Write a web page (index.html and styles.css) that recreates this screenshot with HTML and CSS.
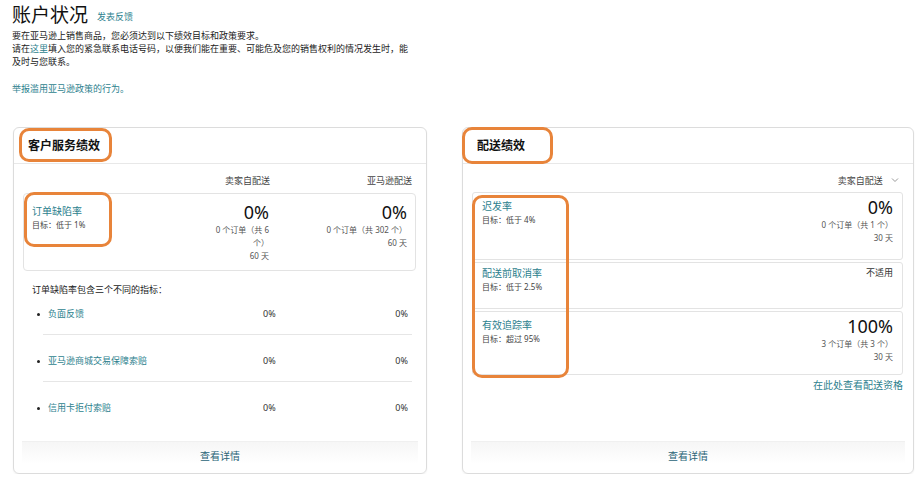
FILE: index.html
```html
<!DOCTYPE html>
<html lang="zh-CN">
<head>
    <meta charset="UTF-8">
    <title>账户状况</title>
    <link rel="stylesheet" href="styles.css">
</head>
<body>
    <div class="page">
        <div class="intro">
            <h1>账户状况 <a class="feedback" href="#">发表反馈</a></h1>
            <p>要在亚马逊上销售商品，您必须达到以下绩效目标和政策要求。</p>
            <p>请在<a href="#">这里</a>填入您的紧急联系电话号码，以便我们能在重要、可能危及您的销售权利的情况发生时，能<br>及时与您联系。</p>
            <p class="report"><a href="#">举报滥用亚马逊政策的行为。</a></p>
        </div>

        <div class="cards">
            <div class="card">
                <div class="card-head">客户服务绩效</div>
                <div class="card-body">
                    <div class="col-heads">
                        <span></span>
                        <span>卖家自配送</span>
                        <span>亚马逊配送</span>
                    </div>
                    <div class="metric-box odr">
                        <div class="label">
                            <a href="#">订单缺陷率</a>
                            <div class="goal">目标：低于 1%</div>
                        </div>
                        <div class="value">
                            <div class="big">0%</div>
                            <div class="sub">0 个订单（共 6<br>个）</div>
                            <div class="sub">60 天</div>
                        </div>
                        <div class="value">
                            <div class="big">0%</div>
                            <div class="sub">0 个订单（共 302 个）</div>
                            <div class="sub">60 天</div>
                        </div>
                    </div>
                    <p class="desc">订单缺陷率包含三个不同的指标：</p>
                    <ul class="metric-list">
                        <li><a href="#">负面反馈</a><span>0%</span><span class="r">0%</span></li>
                        <li><a href="#">亚马逊商城交易保障索赔</a><span>0%</span><span class="r">0%</span></li>
                        <li><a href="#">信用卡拒付索赔</a><span>0%</span><span class="r">0%</span></li>
                    </ul>
                </div>
                <div class="card-foot"><a href="#">查看详情</a></div>
                <div class="mark" style="left:5px;top:0;width:93px;height:34px"></div>
                <div class="mark" style="left:10px;top:64px;width:88px;height:55px"></div>
            </div>

            <div class="card">
                <div class="card-head">配送绩效</div>
                <div class="card-body">
                    <div class="select">卖家自配送
                        <svg width="8" height="6" viewBox="0 0 8 6"><path d="M1 1.5 L4 4.5 L7 1.5" fill="none" stroke="#999" stroke-width="1"/></svg>
                    </div>
                    <div class="ship-box tall">
                        <div class="label">
                            <a href="#">迟发率</a>
                            <div class="goal">目标：低于 4%</div>
                        </div>
                        <div class="value">
                            <div class="big">0%</div>
                            <div class="sub">0 个订单（共 1 个）</div>
                            <div class="sub">30 天</div>
                        </div>
                    </div>
                    <div class="ship-box short">
                        <div class="label">
                            <a href="#">配送前取消率</a>
                            <div class="goal">目标：低于 2.5%</div>
                        </div>
                        <div class="value">
                            <div class="na">不适用</div>
                        </div>
                    </div>
                    <div class="ship-box mid">
                        <div class="label">
                            <a href="#">有效追踪率</a>
                            <div class="goal">目标：超过 95%</div>
                        </div>
                        <div class="value">
                            <div class="big">100%</div>
                            <div class="sub">3 个订单（共 3 个）</div>
                            <div class="sub">30 天</div>
                        </div>
                    </div>
                    <div class="more"><a href="#">在此处查看配送资格</a></div>
                </div>
                <div class="card-foot"><a href="#">查看详情</a></div>
                <div class="mark" style="left:-1px;top:-1px;width:91px;height:37px"></div>
                <div class="mark" style="left:9px;top:67px;width:97px;height:183px"></div>
            </div>
        </div>
    </div>
</body>
</html>
```

FILE: styles.css
```css
body {
    margin: 0;
    background: #fff;
    color: #222;
    font-family: "Noto Sans", "Noto Sans CJK SC", sans-serif;
}

a {
    color: #2d7f8e;
    text-decoration: none;
}

.page {
    padding: 3px 10px 0 12px;
}

.intro h1 {
    margin: 0;
    font-size: 19px;
    line-height: 24px;
    font-weight: normal;
    color: #111;
}

.feedback {
    font-size: 9px;
    margin-left: 4px;
    vertical-align: 2px;
}

.intro p {
    margin: 0;
    font-size: 9px;
    line-height: 13px;
}

.intro .report {
    margin-top: 14px;
}

.cards {
    display: grid;
    grid-template-columns: 414px 452px;
    gap: 35px;
    margin-top: 32px;
    padding-left: 1px;
}

.card {
    position: relative;
    height: 347px;
    box-sizing: border-box;
    border: 1px solid #dcdcdc;
    border-radius: 6px;
    box-shadow: 0 1px 2px rgba(0,0,0,0.06);
    display: flex;
    flex-direction: column;
}

.card-head {
    height: 35px;
    line-height: 35px;
    padding: 0 14px;
    font-size: 12px;
    font-weight: bold;
    color: #111;
    border-bottom: 1px solid #e8e8e8;
}

.card-body {
    padding: 9px 10px 0 9px;
}

.col-heads {
    display: grid;
    grid-template-columns: 1fr 80px 142px;
    padding: 0 4px 0 9px;
    font-size: 9px;
    line-height: 16px;
    color: #444;
    text-align: right;
    margin-bottom: 4px;
}

.metric-box {
    display: grid;
    grid-template-columns: 1fr 80px 138px;
    border: 1px solid #e3e3e3;
    border-radius: 4px;
    padding: 7px 8px 8px 8px;
}

.label {
    padding-top: 3px;
}

.label a {
    display: block;
    font-size: 10px;
    line-height: 14px;
}

.goal {
    font-size: 8px;
    line-height: 14px;
    color: #444;
}

.value {
    text-align: right;
}

.big {
    font-size: 18px;
    line-height: 22px;
    color: #111;
}

.sub {
    font-size: 8px;
    line-height: 13px;
    color: #555;
}

.desc {
    margin: 12px 0 0 9px;
    font-size: 9px;
    line-height: 14px;
}

.metric-list {
    margin: 0;
    padding: 0 4px 0 20px;
    font-size: 9px;
    line-height: 14px;
}

.metric-list li {
    display: grid;
    grid-template-columns: 1fr 72px 73px;
    padding: 19px 4px 13px 5px;
    border-bottom: 1px solid #e6e6e6;
    position: relative;
    color: #333;
}

.metric-list li:first-child {
    padding-top: 10px;
}

.metric-list li:last-child {
    border-bottom: none;
}

.metric-list li::before {
    content: "";
    position: absolute;
    left: -6px;
    bottom: 18px;
    width: 3px;
    height: 3px;
    border-radius: 50%;
    background: #222;
}

.metric-list .r {
    text-align: right;
}

.card-foot {
    margin: auto 8px 0;
    height: 31px;
    line-height: 28px;
    text-align: center;
    font-size: 10px;
    border-top: 1px solid #f0f0f0;
    background: linear-gradient(to bottom, #f6f6f6, #fff 70%);
    border-radius: 0 0 6px 6px;
}

.card-foot a {
    color: #2a6478;
}

.select {
    text-align: right;
    font-size: 9px;
    line-height: 16px;
    color: #444;
    padding-right: 4px;
    margin-bottom: 3px;
}

.select svg {
    margin-left: 6px;
    vertical-align: 1px;
}

.ship-box {
    display: flex;
    justify-content: space-between;
    border: 1px solid #e3e3e3;
    border-radius: 3px;
    padding: 3px 9px 8px;
    margin-bottom: 2px;
    box-sizing: border-box;
}

.ship-box.tall {
    height: 68px;
}

.ship-box.short {
    height: 47px;
    padding-top: 0;
}

.ship-box.mid {
    height: 64px;
}

.na {
    font-size: 9px;
    line-height: 14px;
    padding-top: 3px;
    color: #333;
}

.more {
    text-align: right;
    font-size: 10px;
    line-height: 14px;
    margin-top: 3px;
}

.mark {
    position: absolute;
    box-sizing: border-box;
    border: 3px solid #e8843a;
    border-radius: 10px;
    pointer-events: none;
}
```
